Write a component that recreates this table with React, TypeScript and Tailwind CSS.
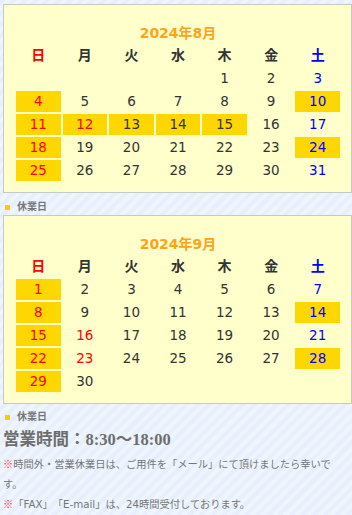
import React from 'react';

type Month = {
    title: string;
    startDay: number;
    days: number;
    closed: number[];
    holidays: number[];
};

const months: Month[] = [
    { title: '2024年8月', startDay: 4, days: 31, closed: [4, 10, 11, 12, 13, 14, 15, 18, 24, 25], holidays: [12] },
    { title: '2024年9月', startDay: 0, days: 30, closed: [1, 8, 14, 15, 22, 28, 29], holidays: [16, 23] },
];

const weekdays = ['日', '月', '火', '水', '木', '金', '土'];

const Calendar = ({ month }: { month: Month }) => {
    const cells: (number | null)[] = [];
    for (let i = 0; i < month.startDay; i++) cells.push(null);
    for (let d = 1; d <= month.days; d++) cells.push(d);
    while (cells.length % 7 !== 0) cells.push(null);

    return (
        <div className="ml-[3px] w-[349px] border border-[#c8c8c8] bg-[#ffffcc] pt-[18px] pb-[11px] pl-[12px] pr-[11px]">
            <div className="text-center text-[14px] leading-[20px] font-bold text-[#ffa31a] mb-[2px]">
                {month.title}
            </div>
            <div className="grid grid-cols-7 gap-[2px]">
                {weekdays.map((w, i) => (
                    <div
                        key={w}
                        className={`h-[21px] leading-[21px] text-center text-[14px] font-bold ${
                            i === 0 ? 'text-[#ff0000]' : i === 6 ? 'text-[#0000ff]' : 'text-[#333333]'
                        }`}
                    >
                        {w}
                    </div>
                ))}
                {cells.map((d, i) => {
                    const col = i % 7;
                    const red = d !== null && (col === 0 || month.holidays.includes(d));
                    const blue = col === 6;
                    const closed = d !== null && month.closed.includes(d);
                    return (
                        <div
                            key={i}
                            className={`h-[21px] leading-[21px] text-center text-[13.5px] ${
                                closed ? 'bg-[#ffd700]' : ''
                            } ${red ? 'text-[#ff0000]' : blue ? 'text-[#0000ff]' : 'text-[#333333]'}`}
                        >
                            {d ?? ''}
                        </div>
                    );
                })}
            </div>
        </div>
    );
};

const Legend = ({ top }: { top: string }) => (
    <div className={`flex items-center h-[22px] pl-[5px] ${top}`}>
        <span className="w-[5px] h-[5px] bg-[#ffcc00] mr-[7px]"></span>
        <span className="text-[10px] leading-[16px] font-bold text-[#777777]">休業日</span>
    </div>
);

export default function App() {
    return (
        <div
            className="min-h-screen w-[352px] pt-[4px] bg-[repeating-linear-gradient(135deg,#e6effb_0px,#e6effb_4px,#eff5fd_4px,#eff5fd_8px)]"
            style={{ fontFamily: '"DejaVu Sans", "Noto Sans CJK JP", sans-serif' }}
        >
            <Calendar month={months[0]} />
            <Legend top="pt-[6px]" />
            <Calendar month={months[1]} />
            <Legend top="pt-[4px]" />
            <h3
                className="pl-[3px] text-[16.5px] leading-[28px] font-bold text-[#6e6e6e]"
                style={{ fontFamily: '"Liberation Serif", "Noto Sans CJK JP", serif' }}
            >
                営業時間：8:30〜18:00
            </h3>
            <div
                className="pl-[3px] pr-[12px] text-[10.25px] leading-[20px] text-[#777777]"
                style={{ fontFamily: '"Noto Sans CJK JP", sans-serif', textSpacingTrim: 'space-all' } as React.CSSProperties}
            >
                <p>
                    <span className="text-[#ff3333]">※</span>時間外・営業休業日は、ご用件を「メール」にて頂けましたら幸いです。
                </p>
                <p>
                    <span className="text-[#ff3333]">※</span>「
                    <span style={{ fontFamily: '"DejaVu Sans", sans-serif' }}>FAX</span>」「
                    <span style={{ fontFamily: '"DejaVu Sans", sans-serif' }}>E-mail</span>」は、
                    <span style={{ fontFamily: '"DejaVu Sans", sans-serif' }}>24</span>時間受付しております。
                </p>
            </div>
        </div>
    );
}
